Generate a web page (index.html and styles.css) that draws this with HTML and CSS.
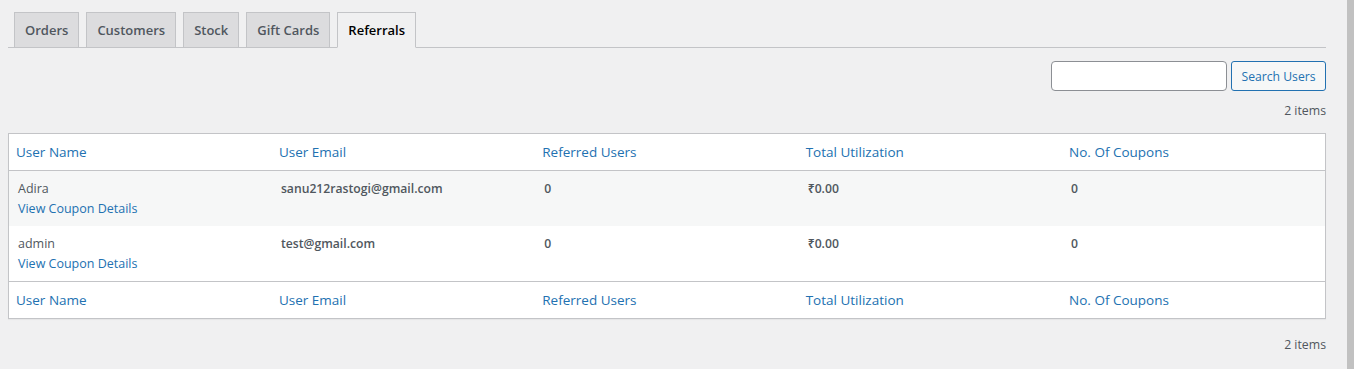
FILE: index.html
```html
<!DOCTYPE html>
<html lang="en">
<head>
    <meta charset="UTF-8">
    <meta name="viewport" content="width=device-width, initial-scale=1.0">
    <title>Referrals</title>
    <link rel="stylesheet" href="styles.css">
</head>
<body>
    <div class="wrap">
        <nav class="nav-tab-wrapper">
            <a class="nav-tab" href="#">Orders</a>
            <a class="nav-tab" href="#">Customers</a>
            <a class="nav-tab" href="#">Stock</a>
            <a class="nav-tab" href="#">Gift Cards</a>
            <a class="nav-tab nav-tab-active" href="#">Referrals</a>
        </nav>

        <form class="search-box">
            <input type="search" class="search-input">
            <button type="button" class="button">Search Users</button>
        </form>

        <div class="tablenav">2 items</div>

        <table class="list-table">
            <thead>
                <tr>
                    <th>User Name</th>
                    <th>User Email</th>
                    <th>Referred Users</th>
                    <th>Total Utilization</th>
                    <th>No. Of Coupons</th>
                </tr>
            </thead>
            <tbody>
                <tr class="alt">
                    <td>Adira<br><a href="#">View Coupon Details</a></td>
                    <td><strong>sanu212rastogi@gmail.com</strong></td>
                    <td><strong>0</strong></td>
                    <td><strong>₹0.00</strong></td>
                    <td><strong>0</strong></td>
                </tr>
                <tr>
                    <td>admin<br><a href="#">View Coupon Details</a></td>
                    <td><strong>test@gmail.com</strong></td>
                    <td><strong>0</strong></td>
                    <td><strong>₹0.00</strong></td>
                    <td><strong>0</strong></td>
                </tr>
            </tbody>
            <tfoot>
                <tr>
                    <th>User Name</th>
                    <th>User Email</th>
                    <th>Referred Users</th>
                    <th>Total Utilization</th>
                    <th>No. Of Coupons</th>
                </tr>
            </tfoot>
        </table>

        <div class="tablenav bottom">2 items</div>
    </div>
    <div class="scrollbar"></div>
</body>
</html>
```

FILE: styles.css
```css
body {
    margin: 0;
    background-color: #f0f0f1;
    font-family: "Open Sans", "Noto Sans", sans-serif;
    font-size: 12.5px;
    color: #50575e;
}
.wrap {
    padding: 12px 28px 0 8px;
}
.nav-tab-wrapper {
    display: flex;
    gap: 7px;
    padding-left: 6px;
    border-bottom: 1px solid #c3c4c7;
}
.nav-tab {
    display: block;
    margin-bottom: -1px;
    padding: 5px 10px;
    line-height: 24px;
    font-size: 13px;
    font-weight: 600;
    color: #50575e;
    text-decoration: none;
    background-color: #dcdcde;
    border: 1px solid #c3c4c7;
}
.nav-tab-active {
    background-color: #f0f0f1;
    border-bottom-color: #f0f0f1;
    color: #000;
}
.search-box {
    display: flex;
    justify-content: flex-end;
    gap: 4px;
    margin-top: 13px;
}
.search-input {
    width: 176px;
    height: 30px;
    box-sizing: border-box;
    border: 1px solid #8c8f94;
    border-radius: 4px;
    background: #fff;
}
.button {
    width: 95px;
    height: 30px;
    padding: 0;
    font-family: inherit;
    font-size: 12.2px;
    color: #2271b1;
    background-color: #f6f7f7;
    border: 1px solid #2271b1;
    border-radius: 3px;
}
.tablenav {
    text-align: right;
    font-size: 12.3px;
    line-height: 20px;
    padding: 10px 0 12px;
}
.tablenav.bottom {
    padding-top: 16px;
}
.list-table {
    width: 100%;
    table-layout: fixed;
    border-collapse: collapse;
    background: #fff;
    border: 1px solid #c3c4c7;
    box-shadow: 0 1px 1px rgba(0,0,0,0.04);
}
.list-table th {
    text-align: left;
    font-weight: 400;
    font-size: 13.5px;
    line-height: 20px;
    color: #2271b1;
    padding: 8px 8px 8px 7px;
}
.list-table thead tr {
    border-bottom: 1px solid #c3c4c7;
}
.list-table tfoot tr {
    border-top: 1px solid #c3c4c7;
}
.list-table td {
    vertical-align: top;
    padding: 8px 10px 8px 9px;
    line-height: 19.5px;
}
.list-table td strong {
    font-weight: 600;
    font-size: 12.2px;
}
.list-table td a {
    color: #2271b1;
    text-decoration: none;
}
.list-table tr.alt {
    background-color: #f6f7f7;
}
.scrollbar {
    position: absolute;
    top: 0;
    right: 0;
    width: 7px;
    height: 369px;
    background-color: #c1c1c1;
}
```
